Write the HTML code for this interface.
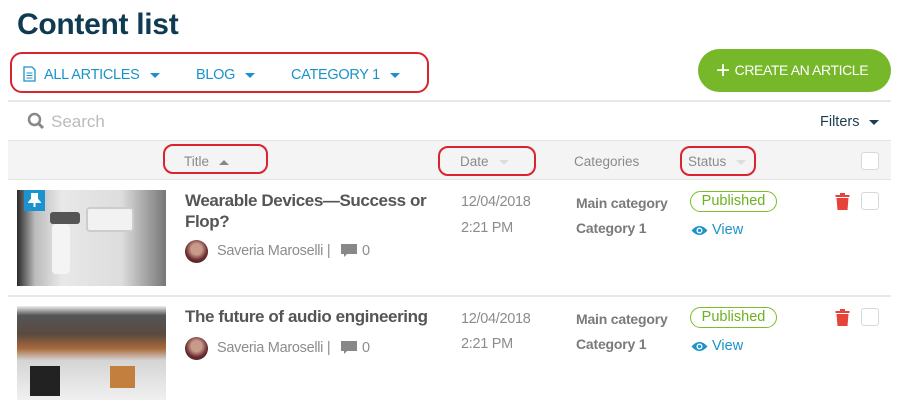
<!DOCTYPE html>
<html><head><meta charset="utf-8"><style>
*{margin:0;padding:0;box-sizing:border-box}
body{width:898px;height:404px;background:#fff;font-family:"Liberation Sans",sans-serif;position:relative;overflow:hidden}
.a{position:absolute;white-space:nowrap}
.red{position:absolute;border:2px solid #d9232e;border-radius:10px}
.blue{color:#1a93c8;font-size:14.5px;letter-spacing:-0.3px}
.tri{display:inline-block;width:0;height:0;border-left:5px solid transparent;border-right:5px solid transparent;border-top:5px solid #1a93c8;vertical-align:middle;margin-left:10px}
.hd{color:#8a8a8a;font-size:13.5px}
.g{color:#8c8c8c;font-size:14.5px;letter-spacing:-0.3px}
.cat{color:#7a7a7a;font-size:14px;font-weight:bold;letter-spacing:-0.2px}
.pub{position:absolute;border:1.5px solid #7dbd2a;border-radius:12px;color:#6bb21e;font-size:14.5px;text-align:center;line-height:19px}
.cb{position:absolute;width:18px;height:18px;border:1.5px solid #d8d8d8;border-radius:3px;background:#fff}
.tt{color:#555;font-size:17px;font-weight:bold;line-height:21px;letter-spacing:-0.4px}
.av{position:absolute;width:23px;height:23px;border-radius:50%;background:radial-gradient(circle at 50% 40%,#c89a8a 0 30%,#6a2c30 60%,#3a1a1e)}
.com{position:absolute;width:16px;height:13px}
</style></head><body>
<div class="a" style="left:17px;top:8px;font-size:30px;font-weight:bold;color:#0f3b52;letter-spacing:-0.3px">Content list</div>
<div class="red" style="left:10px;top:52px;width:419px;height:41px;border-radius:12px"></div>
<svg class="a" style="left:23px;top:66px" width="13" height="16" viewBox="0 0 13 16"><path d="M1 1h8l3 3v11H1z" fill="none" stroke="#1a93c8" stroke-width="1.3"/><path d="M3.5 7h6M3.5 9.5h6M3.5 12h6" stroke="#1a93c8"/></svg>
<div class="a blue" style="left:44px;top:67px">ALL ARTICLES<span class="tri"></span></div>
<div class="a blue" style="left:196px;top:67px">BLOG<span class="tri"></span></div>
<div class="a blue" style="left:291px;top:67px">CATEGORY 1<span class="tri"></span></div>
<div class="a" style="left:698px;top:49px;width:193px;height:43px;border-radius:22px;background:#76b82a;color:#fff;font-size:14px;line-height:43px;padding-left:18px;letter-spacing:-0.4px"><span style="font-size:24px;vertical-align:-3px;margin-right:5px">+</span>CREATE AN ARTICLE</div>
<div class="a" style="left:8px;top:100px;width:883px;height:2px;background:#e8e8e8"></div>
<svg class="a" style="left:27px;top:112px" width="18" height="18" viewBox="0 0 18 18"><circle cx="7.5" cy="7.5" r="5.5" fill="none" stroke="#888" stroke-width="2.5"/><path d="M11.5 11.5L16 16" stroke="#888" stroke-width="3"/></svg>
<div class="a" style="left:51px;top:112px;font-size:17px;color:#bbb">Search</div>
<div class="a" style="left:820px;top:114px;font-size:14.5px;color:#1d3d52">Filters<span class="tri" style="border-top-color:#1d3d52"></span></div>
<div class="a" style="left:8px;top:140px;width:883px;height:40px;background:#f4f4f4;border-top:1px solid #e3e3e3;border-bottom:1px solid #e3e3e3"></div>
<div class="red" style="left:163px;top:144px;width:105px;height:30px"></div>
<div class="a hd" style="left:184px;top:154px">Title<span class="tri" style="border-top:none;border-bottom:5px solid #888;margin-left:10px"></span></div>
<div class="red" style="left:438px;top:146px;width:98px;height:30px"></div>
<div class="a hd" style="left:460px;top:154px">Date<span class="tri" style="border-top-color:#ddd"></span></div>
<div class="a hd" style="left:574px;top:154px">Categories</div>
<div class="red" style="left:680px;top:146px;width:76px;height:30px"></div>
<div class="a hd" style="left:688px;top:154px">Status<span class="tri" style="border-top-color:#ddd"></span></div>
<div class="cb" style="left:861px;top:152px"></div>

<div class="a" style="left:17px;top:190px;width:149px;height:96px;background:linear-gradient(90deg,#2a2a2a 0,#bbb 12%,#e8e8e8 30%,#ddd 70%,#777 100%)"></div>
<div class="a" style="left:50px;top:212px;width:30px;height:12px;background:#555;border-radius:3px"></div>
<div class="a" style="left:52px;top:224px;width:18px;height:50px;background:#f4f4f4;border-radius:4px"></div>
<div class="a" style="left:86px;top:207px;width:48px;height:25px;background:#f2f2f2;border:2px solid #ccc;border-radius:4px"></div>
<div class="a" style="left:24px;top:190px;width:21px;height:21px;background:#1a93d0"></div>
<svg class="a" style="left:28px;top:193px" width="13" height="15" viewBox="0 0 13 15"><path d="M3 1h7M4 1v5L1.5 9h10L9 6V1M6.5 9v5" stroke="#fff" stroke-width="2" fill="#fff"/></svg>
<div class="a tt" style="left:185px;top:190px">Wearable Devices—Success or<br>Flop?</div>
<div class="av" style="left:185px;top:240px"></div>
<div class="a g" style="left:217px;top:243px">Saveria Maroselli |</div>
<svg class="com" style="left:341px;top:244px" viewBox="0 0 16 13"><path d="M0 0h16v10H6L3 13V10H0z" fill="#888"/></svg>
<div class="a g" style="left:362px;top:243px">0</div>
<div class="a g" style="left:461px;top:194px">12/04/2018</div>
<div class="a g" style="left:461px;top:220px">2:21 PM</div>
<div class="a cat" style="left:576px;top:195px">Main category</div>
<div class="a cat" style="left:576px;top:220px">Category 1</div>
<div class="pub" style="left:690px;top:191px;width:87px;height:21px">Published</div>
<svg class="a" style="left:691px;top:225px" width="17" height="11" viewBox="0 0 17 11"><path d="M0.5 5.5Q8.5 -3.5 16.5 5.5Q8.5 14.5 0.5 5.5z" fill="#1a93c8"/><circle cx="8.5" cy="5.5" r="3" fill="#fff"/><circle cx="8.5" cy="5.5" r="1.6" fill="#1a93c8"/></svg>
<div class="a" style="left:712px;top:222px;color:#1a93c8;font-size:14.5px">View</div>
<svg class="a" style="left:835px;top:193px" width="15" height="17" viewBox="0 0 15 17"><path d="M0.5 2h14v2h-14zM5 0h5v2H5zM1.5 5h12l-1 12h-10z" fill="#e8433b"/></svg>
<div class="cb" style="left:861px;top:192px"></div>
<div class="a" style="left:8px;top:295px;width:883px;height:2px;background:#e8e8e8"></div>

<div class="a" style="left:17px;top:306px;width:149px;height:94px;background:linear-gradient(180deg,#eee 0,#555 10%,#5a4a40 30%,#a8683a 45%,#d5d5d5 58%,#f0f0f0 100%)"></div>
<div class="a" style="left:30px;top:366px;width:30px;height:30px;background:#222"></div>
<div class="a" style="left:110px;top:366px;width:25px;height:22px;background:#c27f3e"></div>
<div class="a tt" style="left:185px;top:306px">The future of audio engineering</div>
<div class="av" style="left:185px;top:337px"></div>
<div class="a g" style="left:217px;top:340px">Saveria Maroselli |</div>
<svg class="com" style="left:341px;top:341px" viewBox="0 0 16 13"><path d="M0 0h16v10H6L3 13V10H0z" fill="#888"/></svg>
<div class="a g" style="left:362px;top:340px">0</div>
<div class="a g" style="left:461px;top:311px">12/04/2018</div>
<div class="a g" style="left:461px;top:336px">2:21 PM</div>
<div class="a cat" style="left:576px;top:311px">Main category</div>
<div class="a cat" style="left:576px;top:336px">Category 1</div>
<div class="pub" style="left:690px;top:307px;width:87px;height:21px">Published</div>
<svg class="a" style="left:691px;top:341px" width="17" height="11" viewBox="0 0 17 11"><path d="M0.5 5.5Q8.5 -3.5 16.5 5.5Q8.5 14.5 0.5 5.5z" fill="#1a93c8"/><circle cx="8.5" cy="5.5" r="3" fill="#fff"/><circle cx="8.5" cy="5.5" r="1.6" fill="#1a93c8"/></svg>
<div class="a" style="left:712px;top:338px;color:#1a93c8;font-size:14.5px">View</div>
<svg class="a" style="left:835px;top:309px" width="15" height="17" viewBox="0 0 15 17"><path d="M0.5 2h14v2h-14zM5 0h5v2H5zM1.5 5h12l-1 12h-10z" fill="#e8433b"/></svg>
<div class="cb" style="left:861px;top:308px"></div>
</body></html>
